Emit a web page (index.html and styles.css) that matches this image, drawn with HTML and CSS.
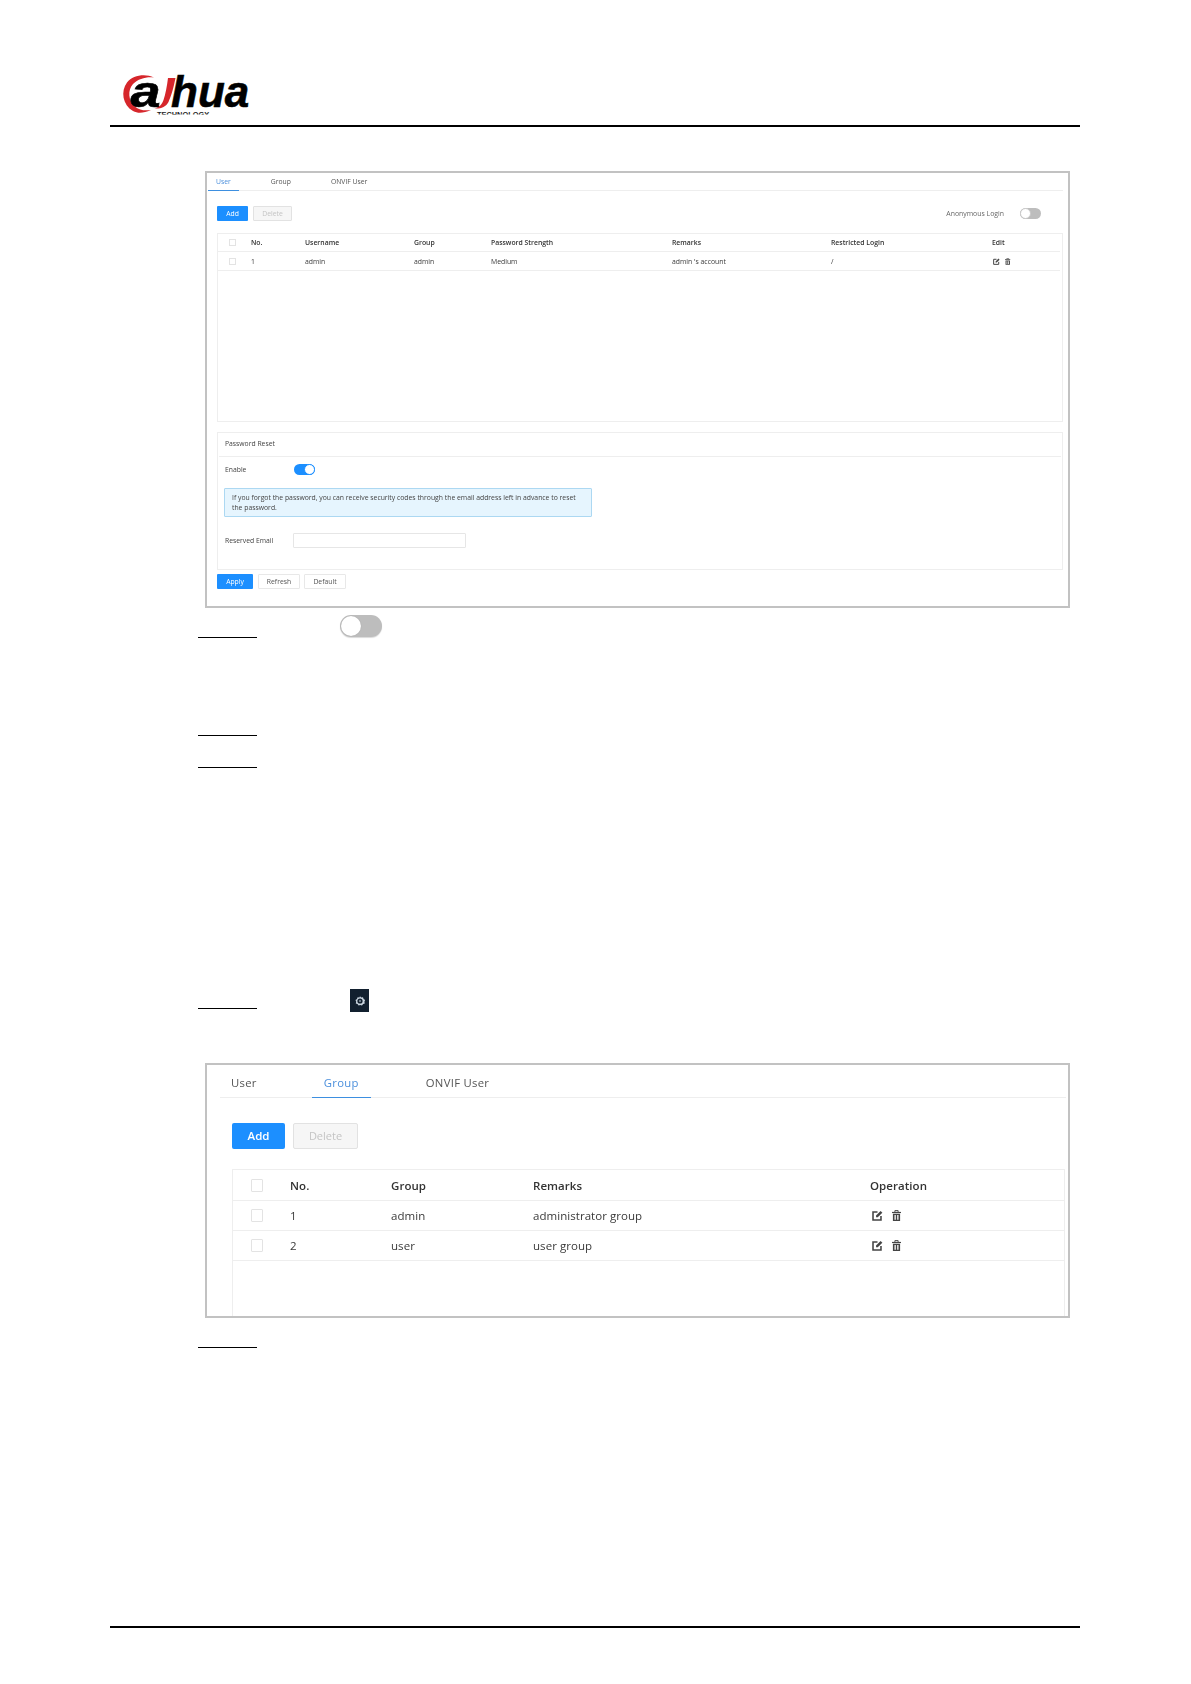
FILE: index.html
```html
<!DOCTYPE html>
<html lang="en">
<head>
<meta charset="utf-8">
<title>User management</title>
<link rel="stylesheet" href="styles.css">
</head>
<body>
<svg class="defs" width="0" height="0" aria-hidden="true">
  <symbol id="i-edit" viewBox="0 0 12 12">
    <path d="M6 2.200H1.100v8.700h8.700V6.600" fill="none" stroke="currentColor" stroke-width="1.700"/>
    <path d="M4.400 7.800V5.900L9.400 1l1.900 1.900-5 4.900z" fill="currentColor"/>
  </symbol>
  <symbol id="i-trash" viewBox="0 0 10 12">
    <path d="M3.200 2V.6h3.600V2" fill="none" stroke="currentColor" stroke-width="1.100"/>
    <path d="M0 2h10v1.300H0z" fill="currentColor"/>
    <path fill-rule="evenodd" d="M1 4h8v8H1zM2.800 5.400v5.200h1.400V5.400zM5.800 5.400v5.200h1.400V5.400z" fill="currentColor"/>
  </symbol>
  <clipPath id="logo-clip"><rect x="0" y="0" width="130" height="40.500"/></clipPath>
</svg>
<div class="page">
  <header class="doc-head">
    <svg class="logo" viewBox="0 0 130 42" width="130" height="42" role="img" aria-label="alhua Technology">
      <path d="M34 3.500C25 -.5 13 1 7 8.500 .5 17 2.500 31 13 37c5 2.700 10.500 2.300 18-1-6.500 .8-11.500 .3-15.500-3C8 27 7.500 16 13 10 18.500 4.500 27 2.500 34 3.500z" fill="#d6262b"/>
      <path d="M48 4h7.500c-2 10-4 17-7 24-2.500 5-8 7-14 6.500 5-1.500 7.500-4 9-8.500 2-6 3.500-14 4.500-22z" fill="#d6262b"/>
      <text class="logo-a" transform="translate(10.500 33) scale(1.230 1)">a</text>
      <text class="logo-hua" x="51" y="33">hua</text>
      <text class="logo-sub" clip-path="url(#logo-clip)" x="37" y="42.500">TECHNOLOGY</text>
    </svg>
  </header>

  <section class="frame frame-user">
    <nav class="tabs">
      <span class="tab active">User</span>
      <span class="tab">Group</span>
      <span class="tab">ONVIF User</span>
    </nav>
    <div class="toolbar">
      <button class="btn primary">Add</button>
      <button class="btn disabled">Delete</button>
      <span class="anon">Anonymous Login</span>
      <span class="switch"><i></i></span>
    </div>
    <div class="table">
      <div class="row head">
        <span class="cell"><i class="check"></i></span><span class="cell">No.</span><span class="cell">Username</span><span class="cell">Group</span><span class="cell">Password Strength</span><span class="cell">Remarks</span><span class="cell">Restricted Login</span><span class="cell">Edit</span>
      </div>
      <div class="row">
        <span class="cell"><i class="check"></i></span><span class="cell">1</span><span class="cell">admin</span><span class="cell">admin</span><span class="cell">Medium</span><span class="cell">admin 's account</span><span class="cell">/</span>
        <span class="cell icons"><svg class="ico-edit"><use href="#i-edit"/></svg><svg class="ico-trash"><use href="#i-trash"/></svg></span>
      </div>
    </div>
    <div class="reset">
      <div class="reset-title">Password Reset</div>
      <div class="reset-enable"><span class="label">Enable</span><span class="switch on"><i></i></span></div>
      <div class="alert">If you forgot the password, you can receive security codes through the email address left in advance to reset the password.</div>
      <div class="reset-email"><span class="label">Reserved Email</span><span class="input"></span></div>
    </div>
    <div class="actions">
      <button class="btn primary apply">Apply</button>
      <button class="btn plain refresh">Refresh</button>
      <button class="btn plain default">Default</button>
    </div>
  </section>

  <div class="step step-toggle"><span class="step-label"></span><span class="big-switch"><i></i></span></div>
  <div class="step step-b"><span class="step-label"></span></div>
  <div class="step step-c"><span class="step-label"></span></div>
  <div class="step step-gear"><span class="step-label"></span>
    <span class="gear"><svg viewBox="0 0 12 12" width="12" height="12"><path d="M6 1.200l1.200 1.300 1.800-.3.600 1.700 1.500 1.100-.7 1.700.4 1.800-1.700.6-1.100 1.500-1.700-.5-1.700.5-1.100-1.500-1.700-.6.400-1.800-.7-1.700 1.500-1.100.6-1.700 1.800.3z" fill="#c9d4df"/><circle cx="6" cy="6" r="2.600" fill="#12202f"/><circle cx="6" cy="6" r="1" fill="#8a98a6"/></svg></span>
  </div>

  <section class="frame frame-group">
    <nav class="tabs">
      <span class="tab">User</span>
      <span class="tab active">Group</span>
      <span class="tab">ONVIF User</span>
    </nav>
    <div class="toolbar">
      <button class="btn primary">Add</button>
      <button class="btn disabled">Delete</button>
    </div>
    <div class="table">
      <div class="row head">
        <span class="cell"><i class="check"></i></span><span class="cell">No.</span><span class="cell">Group</span><span class="cell">Remarks</span><span class="cell">Operation</span>
      </div>
      <div class="row">
        <span class="cell"><i class="check"></i></span><span class="cell">1</span><span class="cell">admin</span><span class="cell">administrator group</span>
        <span class="cell icons"><svg class="ico-edit"><use href="#i-edit"/></svg><svg class="ico-trash"><use href="#i-trash"/></svg></span>
      </div>
      <div class="row">
        <span class="cell"><i class="check"></i></span><span class="cell">2</span><span class="cell">user</span><span class="cell">user group</span>
        <span class="cell icons"><svg class="ico-edit"><use href="#i-edit"/></svg><svg class="ico-trash"><use href="#i-trash"/></svg></span>
      </div>
    </div>
  </section>

  <div class="step step-last"><span class="step-label"></span></div>

  <footer class="doc-foot"></footer>
</div>
</body>
</html>
```

FILE: styles.css
```css
* { box-sizing: border-box; }
html, body { margin: 0; padding: 0; background: #fff; }
.defs { position: absolute; }
.page {
  width: 1191px;
  height: 1684px;
  padding: 0 111px 0 110px;
  display: flex;
  flex-direction: column;
  overflow: hidden;
  font-family: "Open Sans", "Noto Sans", sans-serif;
  color: #3a3a3a;
}

/* document header / footer */
.doc-head {
  height: 127px;
  padding: 74px 0 0 10px;
  border-bottom: 2px solid #000;
}
.logo { display: block; overflow: visible; }
.logo-a, .logo-hua {
  font-family: "Liberation Sans", sans-serif;
  font-weight: 700;
  font-style: italic;
  font-size: 44px;
  fill: #000;
  stroke: #000;
  stroke-width: .6px;
}
.logo-sub {
  font-family: "Liberation Sans", sans-serif;
  font-weight: 700;
  font-size: 7.400px;
  fill: #222;
}
.doc-foot {
  margin-top: auto;
  height: 58px;
  border-top: 2px solid #000;
}

/* framed screenshots */
.frame {
  margin-left: 95px;
  width: 865px;
  border: 2px solid #c2c2c2;
  background: #fff;
  overflow: hidden;
}
.frame-user { margin-top: 44px; height: 437px; padding: 0 5px 0 1px; filter: blur(.4px); }
.frame-group { margin-top: 54px; height: 255px; padding: 0 2px 0 13px; filter: blur(.3px); }

.tabs { display: flex; border-bottom: 1px solid #eee; }
.tab { display: block; border-bottom: 1px solid transparent; margin-bottom: -1px; white-space: nowrap; color: #555; }
.tab.active { color: #4b8fdc; border-bottom-color: #3d8fe0; }

.toolbar { display: flex; align-items: center; }
.btn {
  display: block;
  margin: 0;
  padding: 0;
  border: 1px solid transparent;
  border-radius: 1px;
  font-family: inherit;
  text-align: center;
}
.btn.primary { background: #1c8fff; color: #fff; }
.btn.disabled { background: #f6f6f6; border-color: #e2e2e2; color: #c4c4c4; }
.btn.plain { background: #fff; border-color: #e8e8e8; color: #555; }

.table { border: 1px solid #eee; }
.row { display: grid; align-items: center; border-bottom: 1px solid #eee; }
.row.head { font-weight: 600; color: #333; }
.cell { display: block; white-space: nowrap; }
.check { display: block; border: 1px solid #e3e3e3; background: #fff; }
.icons { display: flex; align-items: center; color: #444; }

/* user frame */
.frame-user .tabs { height: 18px; font-size: 6.800px; line-height: 18px; gap: 24px; }
.frame-user .tab { padding: 0 8px; height: 18px; }
.frame-user .toolbar { margin: 15px 0 0 9px; height: 15px; font-size: 6.900px; }
.frame-user .btn { height: 15px; font-size: 6.800px; line-height: 13px; }
.frame-user .toolbar .primary { width: 31px; }
.frame-user .toolbar .disabled { width: 39px; margin-left: 5px; }
.anon { margin-left: auto; margin-right: 16px; white-space: nowrap; color: #666; }
.switch { display: block; position: relative; width: 21px; height: 11px; margin-right: 22px; border-radius: 6px; background: #bdbdbd; }
.switch i { position: absolute; left: 0; top: 0; width: 11px; height: 11px; border-radius: 50%; background: #fff; border: 1px solid #c8c8c8; }
.switch.on { background: #1c8fff; }
.switch.on i { left: 10px; border-color: #1c8fff; }

.frame-user .table { margin: 12px 0 0 9px; height: 189px; width: 846px; font-size: 6.850px; }
.frame-user .row { grid-template-columns: 33px 54px 109px 77px 181px 159px 161px 72px; height: 19px; margin-right: 2px; }
.frame-user .row.head { height: 18px; padding-bottom: 1px; }
.frame-user .check { width: 7px; height: 7px; margin-left: 11px; }
.frame-user .ico-edit { width: 7px; height: 7px; margin-left: 1px; }
.frame-user .ico-trash { width: 5.500px; height: 7px; margin-left: 5px; }

.reset { margin: 10px 0 0 9px; width: 846px; height: 138px; border: 1px solid #eee; font-size: 6.800px; color: #444; }
.reset-title { height: 24px; margin: 0 1px; padding-left: 6px; line-height: 22px; border-bottom: 1px solid #eee; }
.reset-enable { display: flex; align-items: center; height: 11px; margin-top: 7px; padding-left: 7px; }
.label { display: block; width: 69px; }
.alert {
  width: 368px;
  height: 29px;
  margin: 13px 0 0 6px;
  padding: 4px 7px 3px;
  background: #e6f5fe;
  border: 1px solid #acd8f2;
  border-radius: 1px;
  font-size: 6.840px;
  line-height: 10px;
  color: #444;
}
.reset-email { display: flex; align-items: center; height: 15px; margin-top: 16px; padding-left: 7px; }
.reset-email .label { width: 68px; }
.input { display: block; width: 173px; height: 15px; border: 1px solid #e6e6e6; border-radius: 1px; }

.actions { display: flex; margin: 4px 0 0 9px; }
.actions .apply { width: 36px; }
.actions .refresh { width: 42px; margin-left: 5px; }
.actions .default { width: 42px; margin-left: 4px; }

/* group frame */
.frame-group .tabs { height: 33px; font-size: 11.300px; line-height: 36px; gap: 43px; letter-spacing: .3px; }
.frame-group .tab { padding: 0 12px; height: 33px; }
.frame-group .tab:first-child { margin-left: -1px; }
.frame-group .toolbar { margin: 25px 0 0 12px; height: 26px; }
.frame-group .btn { height: 26px; line-height: 24px; }
.frame-group .btn.primary { width: 53px; font-size: 11.500px; font-weight: 600; border-radius: 2px; }
.frame-group .btn.disabled { width: 65px; margin-left: 8px; font-size: 11px; border-radius: 2px; }

.frame-group .table { margin: 20px 0 0 12px; width: 833px; height: 200px; border-bottom: 0; font-size: 11.500px; letter-spacing: .05px; }
.frame-group .row { grid-template-columns: 57px 101px 142px 337px 196px; height: 30px; }
.frame-group .row.head { height: 31px; }
.frame-group .check { width: 12px; height: 13px; margin-left: 18px; border-radius: 1px; }
.frame-group .ico-edit { width: 11px; height: 11px; margin-left: 2px; }
.frame-group .ico-trash { width: 9px; height: 11px; margin-left: 9px; }

/* numbered step rows: the number cell is a blank with an underline */
.step { display: flex; align-items: flex-end; margin-left: 88px; }
.step-label { display: block; width: 59px; height: 1px; background: #000; }
.step-toggle { margin-top: 7px; height: 23px; }
.step-b { margin-top: 97px; }
.step-c { margin-top: 31px; }
.step-gear { margin-top: 220px; height: 21px; }
.step-last { margin-top: 29px; }

.big-switch {
  display: block;
  position: relative;
  width: 42px;
  height: 22px;
  margin-left: 83px;
  margin-bottom: 1px;
  border-radius: 11px;
  background: #bdbdbd;
  box-shadow: 0 1px 1px rgba(0,0,0,.15);
}
.big-switch i { position: absolute; left: 1px; top: 1px; width: 20px; height: 20px; border-radius: 50%; background: #fff; box-shadow: 0 0 1px #999; }
.gear {
  display: flex;
  align-items: center;
  justify-content: center;
  flex: none;
  width: 19px;
  height: 23px;
  margin-left: 93px;
  margin-bottom: -3px;
  background: #12202f;
}
```
